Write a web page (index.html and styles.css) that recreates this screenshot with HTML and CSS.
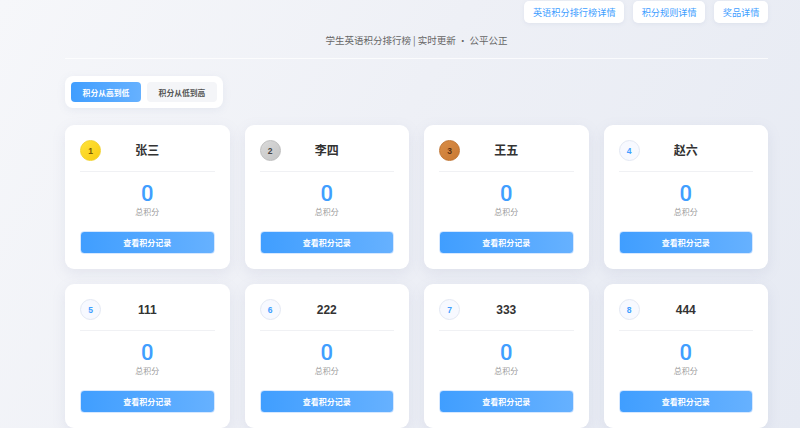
FILE: index.html
```html
<!DOCTYPE html>
<html lang="zh-CN">
<head>
<meta charset="utf-8">
<title>学生英语积分排行榜</title>
<link rel="stylesheet" href="styles.css">
</head>
<body>
<div class="page">
  <div class="topbar">
    <button class="top-btn">英语积分排行榜详情</button>
    <button class="top-btn">积分规则详情</button>
    <button class="top-btn">奖品详情</button>
  </div>
  <div class="subtitle">学生英语积分排行榜 | 实时更新 · 公平公正</div>
  <div class="rule"></div>
  <div class="sort-box">
    <button class="sort-btn active">积分从高到低</button>
    <button class="sort-btn">积分从低到高</button>
  </div>
  <div class="grid">
    <div class="card">
      <div class="card-head"><span class="badge gold">1</span><span class="name">张三</span><span></span></div>
      <div class="score">0</div><div class="score-label">总积分</div>
      <button class="record-btn">查看积分记录</button>
    </div>
    <div class="card">
      <div class="card-head"><span class="badge silver">2</span><span class="name">李四</span><span></span></div>
      <div class="score">0</div><div class="score-label">总积分</div>
      <button class="record-btn">查看积分记录</button>
    </div>
    <div class="card">
      <div class="card-head"><span class="badge bronze">3</span><span class="name">王五</span><span></span></div>
      <div class="score">0</div><div class="score-label">总积分</div>
      <button class="record-btn">查看积分记录</button>
    </div>
    <div class="card">
      <div class="card-head"><span class="badge">4</span><span class="name">赵六</span><span></span></div>
      <div class="score">0</div><div class="score-label">总积分</div>
      <button class="record-btn">查看积分记录</button>
    </div>
    <div class="card">
      <div class="card-head"><span class="badge">5</span><span class="name">111</span><span></span></div>
      <div class="score">0</div><div class="score-label">总积分</div>
      <button class="record-btn">查看积分记录</button>
    </div>
    <div class="card">
      <div class="card-head"><span class="badge">6</span><span class="name">222</span><span></span></div>
      <div class="score">0</div><div class="score-label">总积分</div>
      <button class="record-btn">查看积分记录</button>
    </div>
    <div class="card">
      <div class="card-head"><span class="badge">7</span><span class="name">333</span><span></span></div>
      <div class="score">0</div><div class="score-label">总积分</div>
      <button class="record-btn">查看积分记录</button>
    </div>
    <div class="card">
      <div class="card-head"><span class="badge">8</span><span class="name">444</span><span></span></div>
      <div class="score">0</div><div class="score-label">总积分</div>
      <button class="record-btn">查看积分记录</button>
    </div>
  </div>
</div>
</body>
</html>
```
FILE: styles.css
```css
* { box-sizing: border-box; }
html, body { margin: 0; padding: 0; }
body {
  width: 800px;
  height: 428px;
  overflow: hidden;
  background: linear-gradient(120deg, #f6f7fa 0%, #eef0f6 45%, #e6eaf3 100%);
  font-family: "Noto Sans CJK SC", "Noto Sans", sans-serif;
  color: #333;
}
button { font-family: inherit; border: none; cursor: pointer; padding: 0; }
.page {
  margin-left: 65px;
  width: 703px;
}
.topbar {
  display: flex;
  justify-content: flex-end;
  gap: 9px;
  padding-top: 1px;
}
.top-btn {
  height: 22px;
  padding: 0 8.5px;
  background: #fff;
  color: #409eff;
  font-size: 9.2px;
  border-radius: 5px;
  box-shadow: 0 1px 4px rgba(120, 140, 180, 0.12);
}
.subtitle {
  margin-top: 10px;
  text-align: center;
  font-size: 9.5px;
  line-height: 14px;
  color: #666;
}
.rule {
  margin-top: 11px;
  height: 1px;
  background: rgba(255, 255, 255, 0.75);
}
.sort-box {
  margin-top: 17px;
  display: inline-flex;
  gap: 6px;
  padding: 6px;
  background: #fff;
  border-radius: 8px;
  box-shadow: 0 2px 8px rgba(120, 140, 180, 0.10);
}
.sort-btn {
  width: 70px;
  height: 20px;
  border-radius: 4px;
  font-size: 7.8px;
  font-weight: 700;
  background: #f4f5f8;
  color: #555;
}
.sort-btn.active {
  background: linear-gradient(90deg, #409eff, #66b1ff);
  color: #fff;
}
.grid {
  margin-top: 17px;
  display: grid;
  grid-template-columns: repeat(4, 1fr);
  gap: 15px;
}
.card {
  background: #fff;
  border-radius: 9px;
  padding: 15px 15px 15px;
  box-shadow: 0 4px 14px rgba(120, 135, 170, 0.13);
  display: flex;
  flex-direction: column;
}
.card-head {
  display: grid;
  grid-template-columns: 21px 1fr 21px;
  align-items: center;
  padding-bottom: 10px;
  border-bottom: 1px solid #f0f1f4;
}
.badge {
  width: 21px;
  height: 21px;
  border-radius: 50%;
  display: flex;
  align-items: center;
  justify-content: center;
  font-size: 8.5px;
  font-weight: 700;
  font-family: "Liberation Sans", "Noto Sans", sans-serif;
  color: #409eff;
  background: #f7f9ff;
  border: 1px solid #e3e8f3;
}
.badge.gold {
  background: linear-gradient(135deg, #ffe23a, #f8cc10);
  border-color: #f2d22a;
  color: #7a5a00;
}
.badge.silver {
  background: linear-gradient(135deg, #dadada, #c4c4c4);
  border-color: #bdbdbd;
  color: #444;
}
.badge.bronze {
  background: linear-gradient(135deg, #d98c45, #c97a34);
  border-color: #c07330;
  color: #5a3010;
}
.name {
  text-align: center;
  font-family: "Liberation Sans", "Noto Sans CJK SC", sans-serif;
  font-size: 12px;
  font-weight: 700;
  color: #333;
  line-height: 16px;
}
.score {
  margin-top: 10px;
  text-align: center;
  font-family: "Roboto", "Liberation Sans", sans-serif;
  font-size: 22px;
  font-weight: 500;
  line-height: 24px;
  color: #409eff;
}
.score-label {
  text-align: center;
  font-size: 8px;
  line-height: 12px;
  color: #999;
}
.record-btn {
  margin-top: 13px;
  height: 23px;
  border-radius: 4px;
  background: linear-gradient(90deg, #409eff, #66b1ff);
  border: 1px solid #d6e8ff;
  color: #fff;
  font-size: 8px;
  font-weight: 700;
}
```
